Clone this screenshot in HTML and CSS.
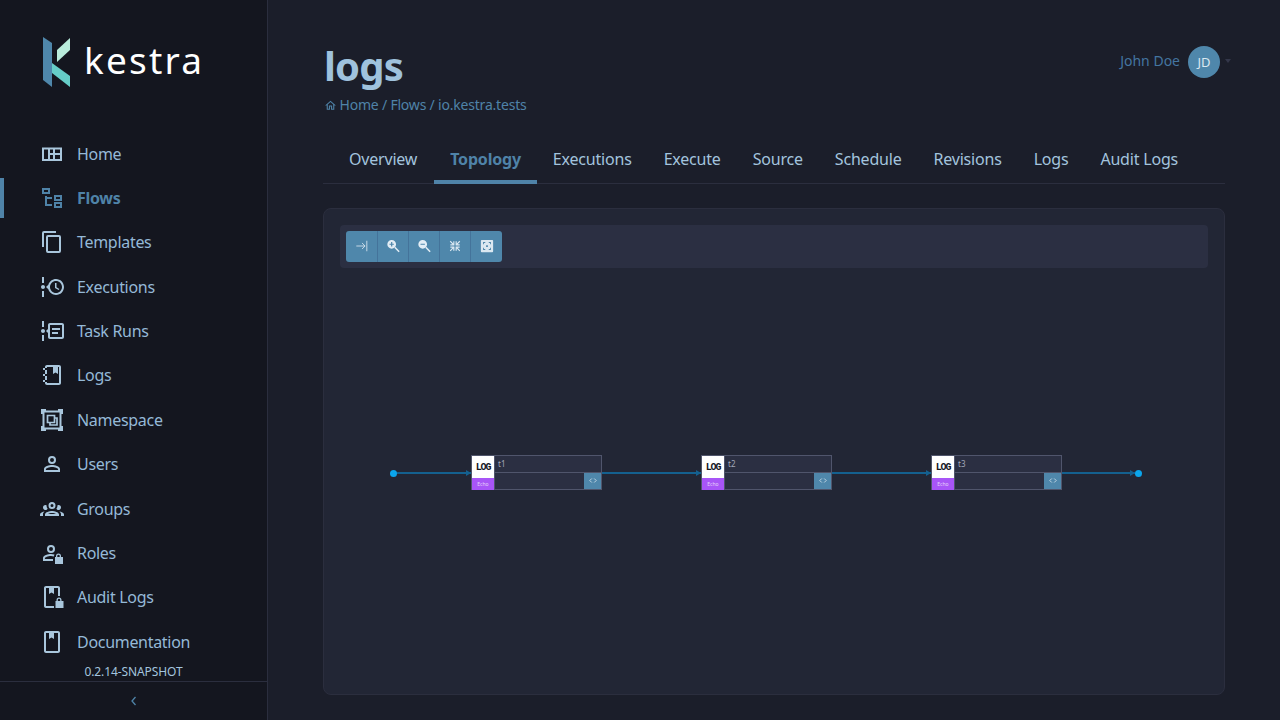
FILE: index.html
```html
<!DOCTYPE html>
<html lang="en">
    <head>
        <meta charset="UTF-8" />
        <meta name="viewport" content="width=device-width, initial-scale=1.0" />
        <title>logs</title>
        <link rel="stylesheet" href="styles.css">
    </head>
    <body>
        <aside class="sidebar">
            <div class="logo">
                <svg class="logo-mark" viewBox="0 0 28 50" width="28" height="50">
                    <polygon points="0,0 9,6 9,50 0,43" fill="#4f87ab"/>
                    <polygon points="14,13 27,1 27,13 14,25" fill="#b9ecdc"/>
                    <polygon points="9,26 27,39 27,50 9,36" fill="#66cdc8"/>
                </svg>
                <span class="logo-text">kestra</span>
            </div>
            <nav class="nav">
                <a class="nav-item"><svg viewBox="0 0 24 24"><path d="M2 5.500h20V19H2zM4 7.500V17h4V7.500zM10 7.500V11h3V7.500zM10 13v4h3v-4zM15 7.500V11h5V7.500zM15 13v4h5v-4z" fill-rule="evenodd"/></svg>Home</a>
                <a class="nav-item active"><svg viewBox="0 0 24 24"><path d="M12 13H7V18H12V20H5V10H7V11H12V13M8 4V6H4V4H8M10 2H2V8H10V2M20 11V13H16V11H20M22 9H14V15H22V9M20 18V20H16V18H20M22 16H14V22H22V16Z"/></svg>Flows</a>
                <a class="nav-item"><svg viewBox="0 0 24 24"><path d="M19,21H8V7H19M19,5H8A2,2 0 0,0 6,7V21A2,2 0 0,0 8,23H19A2,2 0 0,0 21,21V7A2,2 0 0,0 19,5M16,1H4A2,2 0 0,0 2,3V17H4V3H16V1Z"/></svg>Templates</a>
                <a class="nav-item"><svg viewBox="0 0 24 24"><path d="M4 2V8H2V2H4M2 22V16H4V22H2M5 12C5 13.110 4.110 14 3 14C1.900 14 1 13.110 1 12C1 10.900 1.900 10 3 10C4.110 10 5 10.900 5 12M16 4C20.420 4 24 7.580 24 12C24 16.420 20.420 20 16 20C12.390 20 9.340 17.610 8.340 14.330L6 12L8.340 9.670C9.340 6.390 12.390 4 16 4M16 6C12.690 6 10 8.690 10 12C10 15.310 12.690 18 16 18C19.310 18 22 15.310 22 12C22 8.690 19.310 6 16 6M15 13V8H16.500V12.200L19.400 13.900L18.600 15.100L15 13Z"/></svg>Executions</a>
                <a class="nav-item"><svg viewBox="0 0 24 24"><path d="M4 2V8H2V2H4M2 22V16H4V22H2M5 12C5 13.110 4.110 14 3 14C1.900 14 1 13.110 1 12C1 10.900 1.900 10 3 10C4.110 10 5 10.900 5 12M24 6V18C24 19.110 23.110 20 22 20H10C8.900 20 8 19.110 8 18V14L6 12L8 10V6C8 4.890 8.900 4 10 4H22C23.110 4 24 4.890 24 6M22 6H10V18H22V6M12 9H20V11H12V9M12 13H18V15H12V13Z"/></svg>Task Runs</a>
                <a class="nav-item"><svg viewBox="0 0 24 24"><path d="M3 7V5H5V4C5 2.890 5.900 2 7 2H19C20.100 2 21 2.890 21 4V20C21 21.110 20.100 22 19 22H7C5.900 22 5 21.110 5 20V19H3V17H5V13H3V11H5V7H3M7 11H5V13H7V11M7 7V5H5V7H7M7 19V17H5V19H7M13 4H7V20H19V4H18V11L15.500 9.500L13 11V4Z"/></svg>Logs</a>
                <a class="nav-item"><svg viewBox="0 0 24 24"><path fill-rule="evenodd" d="M1 1H6V2.500H18V1H23V6H21.500V18H23V23H18V21.500H6V23H1V18H2.500V6H1ZM4.500 4.500V19.500H19.500V4.500Z"/><path class="line" d="M7.500 7.500h7v7h-7zM10 14.500v2.500h7v-7h-2.500"/></svg>Namespace</a>
                <a class="nav-item"><svg viewBox="0 0 24 24"><path d="M12,4A4,4 0 0,1 16,8A4,4 0 0,1 12,12A4,4 0 0,1 8,8A4,4 0 0,1 12,4M12,6A2,2 0 0,0 10,8A2,2 0 0,0 12,10A2,2 0 0,0 14,8A2,2 0 0,0 12,6M12,13C14.670,13 20,14.330 20,17V20H4V17C4,14.330 9.330,13 12,13M12,14.900C9.030,14.900 5.900,16.360 5.900,17V18.100H18.100V17C18.100,16.360 14.970,14.900 12,14.900Z"/></svg>Users</a>
                <a class="nav-item"><svg viewBox="0 0 24 24"><path d="M12,5A3.500,3.500 0 0,0 8.500,8.500A3.500,3.500 0 0,0 12,12A3.500,3.500 0 0,0 15.500,8.500A3.500,3.500 0 0,0 12,5M12,7A1.500,1.500 0 0,1 13.500,8.500A1.500,1.500 0 0,1 12,10A1.500,1.500 0 0,1 10.500,8.500A1.500,1.500 0 0,1 12,7M5.500,8A2.500,2.500 0 0,0 3,10.500C3,11.440 3.530,12.250 4.290,12.680C4.650,12.880 5.060,13 5.500,13C5.940,13 6.350,12.880 6.710,12.680C7.080,12.470 7.390,12.170 7.620,11.810C6.890,10.860 6.500,9.700 6.500,8.500C6.500,8.410 6.500,8.310 6.500,8.220C6.200,8.080 5.860,8 5.500,8M18.500,8C18.140,8 17.800,8.080 17.500,8.220C17.500,8.310 17.500,8.410 17.500,8.500C17.500,9.700 17.110,10.860 16.380,11.810C16.500,12 16.630,12.150 16.780,12.300C16.940,12.450 17.100,12.580 17.290,12.680C17.650,12.880 18.060,13 18.500,13C18.940,13 19.350,12.880 19.710,12.680C20.470,12.250 21,11.440 21,10.500A2.500,2.500 0 0,0 18.500,8M12,14C9.660,14 5,15.170 5,17.500V19H19V17.500C19,15.170 14.340,14 12,14M4.710,14.550C2.780,14.780 0,15.760 0,17.500V19H3V17.070C3,16.060 3.690,15.220 4.710,14.550M19.290,14.550C20.310,15.220 21,16.060 21,17.070V19H24V17.500C24,15.760 21.220,14.780 19.290,14.550M12,16C13.530,16 15.240,16.500 16.230,17H7.770C8.760,16.500 10.470,16 12,16Z"/></svg>Groups</a>
                <a class="nav-item"><svg viewBox="0 0 24 24"><path d="M11,4A4,4 0 0,1 15,8A4,4 0 0,1 11,12A4,4 0 0,1 7,8A4,4 0 0,1 11,4M11,6A2,2 0 0,0 9,8A2,2 0 0,0 11,10A2,2 0 0,0 13,8A2,2 0 0,0 11,6M11,13C12,13 13.300,13.200 14.500,13.600L13.800,15.400C12.900,15.100 11.900,14.900 11,14.900C8,14.900 4.900,16.360 4.900,17V18.100H13V20H3V17C3,14.330 8.330,13 11,13Z"/><path d="M21 16V15A2.500 2.500 0 0 0 16 15V16H15V23H23V16ZM17.300 16V15A1.200 1.200 0 0 1 19.700 15V16Z" fill-rule="evenodd"/></svg>Roles</a>
                <a class="nav-item"><svg viewBox="0 0 24 24"><path d="M6 1H18C19.100 1 20 1.900 20 3V11H18V3H14V9L11.500 7.500L9 9V3H6V21H14V23H6C4.900 23 4 22.100 4 21V3C4 1.900 4.900 1 6 1Z"/><path d="M21.500 16V15A2.500 2.500 0 0 0 16.500 15V16H15.500V23H23.500V16ZM17.800 16V15A1.200 1.200 0 0 1 20.200 15V16Z" fill-rule="evenodd"/></svg>Audit Logs</a>
                <a class="nav-item"><svg viewBox="0 0 24 24"><path d="M6 1H18C19.100 1 20 1.900 20 3V21C20 22.100 19.100 23 18 23H6C4.900 23 4 22.100 4 21V3C4 1.900 4.900 1 6 1ZM6 3V21H18V3H14V9L11.500 7.500L9 9V3Z" fill-rule="evenodd"/></svg>Documentation</a>
            </nav>
            <div class="version">0.2.14-SNAPSHOT</div>
            <button class="collapse">
                <svg viewBox="0 0 8 12" width="8" height="12"><path d="M5.500 2 2 6l3.500 4" fill="none" stroke="#4f83a8" stroke-width="1.300"/></svg>
            </button>
        </aside>

        <main class="main">
            <header class="top">
                <div>
                    <h1 class="title">logs</h1>
                    <div class="crumbs">
                        <svg viewBox="0 0 24 24" width="13" height="13"><path d="M12 5.690l5 4.500V18h-2v-6H9v6H7v-7.810l5-4.500M12 3L2 12h3v8h6v-6h2v6h6v-8h3L12 3z" fill="#4f83a8"/></svg>
                        <span>Home</span> / <span>Flows</span> / <span>io.kestra.tests</span>
                    </div>
                </div>
                <div class="user">
                    <span class="user-name">John Doe</span>
                    <span class="avatar">JD</span>
                    <span class="caret"></span>
                </div>
            </header>

            <div class="tabs">
                <a class="tab">Overview</a>
                <a class="tab active">Topology</a>
                <a class="tab">Executions</a>
                <a class="tab">Execute</a>
                <a class="tab">Source</a>
                <a class="tab">Schedule</a>
                <a class="tab">Revisions</a>
                <a class="tab">Logs</a>
                <a class="tab">Audit Logs</a>
            </div>

            <section class="card">
                <div class="toolbar">
                    <div class="btn-group">
                        <button class="tool"><svg viewBox="0 0 16 16"><path d="M1.500 8h10M8 4.500 11.500 8 8 11.500M13.500 2v12" fill="none" stroke="#d6e4ef" stroke-width="1"/></svg></button>
                        <button class="tool"><svg viewBox="0 0 16 16"><path d="M6.500 1a5 5 0 1 0 0 10 5 5 0 0 0 0-10zM4 5.300h1.800V3.500h1.400v1.800H9v1.400H7.200v1.800H5.800V6.700H4z" fill="#e3edf5" fill-rule="evenodd"/><path d="m10 9.500 5 5" stroke="#e3edf5" stroke-width="1.800"/></svg></button>
                        <button class="tool"><svg viewBox="0 0 16 16"><path d="M6.500 1a5 5 0 1 0 0 10 5 5 0 0 0 0-10zM4 5.300h5v1.400H4z" fill="#e3edf5" fill-rule="evenodd"/><path d="m10 9.500 5 5" stroke="#e3edf5" stroke-width="1.800"/></svg></button>
                        <button class="tool"><svg viewBox="0 0 24 24"><path d="M19.500,3.090L15,7.590V4H13V11H20V9H16.410L20.910,4.500L19.500,3.090M4,13V15H7.590L3.090,19.500L4.500,20.910L9,16.410V20H11V13H4M20,13H13V20H15V16.410L19.500,20.910L20.910,19.500L16.410,15H20V13M4,9V11H11V4H9V7.590L4.500,3.090L3.090,4.500L7.590,9H4Z" fill="#dbe8f1"/></svg></button>
                        <button class="tool"><svg viewBox="0 0 16 16"><path d="M2 1h12a1 1 0 0 1 1 1v12a1 1 0 0 1-1 1H2a1 1 0 0 1-1-1V2a1 1 0 0 1 1-1zM3.500 3.500V6h1V4.500H6v-1zM10 3.500v1h1.500V6h1V3.500zM3.500 10v2.500H6v-1H4.500V10zM11.500 10v1.500H10v1h2.500V10zM7 7v2h2V7z" fill="#dbe8f1" fill-rule="evenodd"/></svg></button>
                    </div>
                </div>
                <div class="graph">
                    <span class="dot"></span>
                    <span class="edge edge-first"></span>
                    <div class="node">
                        <div class="node-side"><span class="node-icon">LOG</span><span class="node-type">Echo</span></div>
                        <div class="node-body">
                            <div class="node-name">t1</div>
                            <div class="node-foot"><span class="node-btn"><svg viewBox="0 0 10 8" width="10" height="8"><path d="M3.500 1.500 1 4l2.500 2.500M6.500 1.500 9 4 6.500 6.500" fill="none" stroke="#dbe8f1"/></svg></span></div>
                        </div>
                    </div>
                    <span class="edge edge-mid"></span>
                    <div class="node">
                        <div class="node-side"><span class="node-icon">LOG</span><span class="node-type">Echo</span></div>
                        <div class="node-body">
                            <div class="node-name">t2</div>
                            <div class="node-foot"><span class="node-btn"><svg viewBox="0 0 10 8" width="10" height="8"><path d="M3.500 1.500 1 4l2.500 2.500M6.500 1.500 9 4 6.500 6.500" fill="none" stroke="#dbe8f1"/></svg></span></div>
                        </div>
                    </div>
                    <span class="edge edge-mid"></span>
                    <div class="node">
                        <div class="node-side"><span class="node-icon">LOG</span><span class="node-type">Echo</span></div>
                        <div class="node-body">
                            <div class="node-name">t3</div>
                            <div class="node-foot"><span class="node-btn"><svg viewBox="0 0 10 8" width="10" height="8"><path d="M3.500 1.500 1 4l2.500 2.500M6.500 1.500 9 4 6.500 6.500" fill="none" stroke="#dbe8f1"/></svg></span></div>
                        </div>
                    </div>
                    <span class="edge edge-last"></span>
                    <span class="dot"></span>
                </div>
            </section>
        </main>
    </body>
</html>
```

FILE: styles.css
```css
* {
    box-sizing: border-box;
}
html, body {
    height: 100%;
}
body {
    margin: 0;
    display: flex;
    overflow: hidden;
    background: #1b1e2a;
    color: #a3c4de;
    font: normal 16px "Noto Sans", "Open Sans", sans-serif;
}

/* sidebar */
.sidebar {
    width: 268px;
    height: 720px;
    flex-shrink: 0;
    display: flex;
    flex-direction: column;
    background: #14161f;
    border-right: 1px solid #2b2e3e;
}
.logo {
    height: 131.6px;
    padding: 36px 0 0 43px;
    display: flex;
    align-items: flex-start;
    gap: 13px;
}
.logo-mark {
    flex-shrink: 0;
    margin-top: 1px;
}
.logo-text {
    color: #fff;
    font-size: 37px;
    font-weight: 400;
    line-height: 48px;
    letter-spacing: 2.2px;
}
.nav {
    display: flex;
    flex-direction: column;
}
.nav-item {
    height: 40px;
    margin: 2.18px 0;
    display: flex;
    align-items: center;
    gap: 13px;
    padding-left: 36px;
    color: #95b9d7;
    border-left: 4px solid transparent;
    letter-spacing: -0.3px;
}
.nav-item svg {
    width: 24px;
    height: 24px;
    fill: #a9c6dc;
}
.nav-item svg .line {
    fill: none;
    stroke: #a9c6dc;
    stroke-width: 1.7;
}
.nav-item.active {
    color: #4f83a8;
    font-weight: 700;
    border-left-color: #4f83a8;
}
.nav-item.active svg {
    fill: #4f83a8;
}
.version {
    height: 17px;
    font-size: 12px;
    line-height: 16px;
    text-align: center;
    letter-spacing: -0.1px;
    color: #a3c4de;
}
.collapse {
    flex: 1;
    display: flex;
    align-items: center;
    justify-content: center;
    background: none;
    border: 0;
    border-top: 1px solid #2b2e3e;
}

/* main */
.main {
    flex: 1;
    min-width: 0;
    padding: 0 55px 25px 55px;
    display: flex;
    flex-direction: column;
}
.top {
    height: 136px;
    display: flex;
    justify-content: space-between;
}
.title {
    margin: 41px 0 0 1px;
    font-size: 40px;
    line-height: 50px;
    font-weight: 700;
    letter-spacing: -0.8px;
    color: #9fc2dd;
}
.crumbs {
    margin: 4px 0 0 1px;
    font-size: 14px;
    line-height: 20px;
    letter-spacing: -0.2px;
    color: #4f83a8;
}
.crumbs svg {
    vertical-align: -2px;
    margin-right: -1px;
}
.user {
    display: flex;
    align-items: center;
    height: 32px;
    margin-top: 46px;
    margin-right: -6px;
    font-size: 14px;
    color: #4475a0;
}
.user-name {
    margin-top: -4px;
}
.avatar {
    width: 32px;
    height: 32px;
    margin-left: 8px;
    border-radius: 50%;
    background: #4f87ab;
    color: #dbe8f1;
    font-size: 13px;
    line-height: 32px;
    text-align: center;
}
.caret {
    width: 0;
    height: 0;
    margin-left: 5px;
    margin-top: -3px;
    border: 3px solid transparent;
    border-top: 4px solid #33374a;
    border-bottom: 0;
}
.tabs {
    height: 48px;
    padding-left: 10px;
    display: flex;
    border-bottom: 1px solid #2b2e3e;
}
.tab {
    padding: 0 16px;
    line-height: 46px;
    letter-spacing: -0.2px;
    color: #a3c4de;
}
.tab:first-child {
    padding-right: 17px;
}
.tab.active {
    color: #4f83a8;
    font-weight: 700;
    border-bottom: 4px solid #4f83a8;
    margin-bottom: -1px;
}

/* topology card */
.card {
    flex: 1;
    margin-top: 24px;
    padding: 16px;
    display: flex;
    flex-direction: column;
    background: #222635;
    border: 1px solid #2b2e3e;
    border-radius: 8px;
}
.toolbar {
    height: 43px;
    padding: 6px;
    background: #2b2f42;
    border-radius: 4px;
}
.btn-group {
    display: inline-flex;
    border-radius: 3px;
    overflow: hidden;
}
.tool {
    width: 31px;
    height: 31px;
    padding: 0;
    display: flex;
    align-items: center;
    justify-content: center;
    background: #4f87ab;
    border: 0;
    border-left: 1px solid #44739a;
}
.tool:first-child {
    border-left: 0;
}
.tool:last-child {
    width: 32px;
}
.tool svg {
    width: 14px;
    height: 14px;
    margin-top: -1px;
}
.graph {
    flex: 1;
    padding-left: 50px;
    display: flex;
    align-items: center;
}
.dot {
    width: 7px;
    height: 7px;
    flex-shrink: 0;
    border-radius: 50%;
    background: #0ba5ec;
}
.edge {
    position: relative;
    height: 2px;
    background: #14608f;
}
.edge::after {
    content: "";
    position: absolute;
    right: 0;
    top: -2px;
    border-left: 5px solid #14608f;
    border-top: 3px solid transparent;
    border-bottom: 3px solid transparent;
}
.edge-first {
    width: 74px;
}
.edge-mid {
    width: 99px;
}
.edge-last {
    width: 73px;
}
.node {
    width: 131px;
    height: 35px;
    margin-bottom: 2px;
    flex-shrink: 0;
    display: flex;
    border: 1px solid #50556c;
    background: #2b2f42;
}
.node-side {
    width: 23px;
    display: flex;
    flex-direction: column;
    border-right: 1px solid #50556c;
}
.node-icon {
    height: 22px;
    background: #fff;
    color: #14161f;
    font: bold 10px "Liberation Mono", monospace;
    line-height: 24px;
    letter-spacing: -1.2px;
    text-align: center;
}
.node-type {
    flex: 1;
    background: #a855f7;
    color: #e6d5fb;
    font-size: 5px;
    line-height: 12px;
    text-align: center;
}
.node-body {
    flex: 1;
    display: flex;
    flex-direction: column;
}
.node-name {
    height: 17px;
    padding-left: 3px;
    border-bottom: 1px solid #50556c;
    color: #a2a7b8;
    font-size: 8px;
    line-height: 15px;
}
.node-foot {
    flex: 1;
    display: flex;
    justify-content: flex-end;
}
.node-btn {
    width: 17px;
    display: flex;
    align-items: center;
    justify-content: center;
    background: #4f87ab;
}
.node-btn svg {
    width: 8px;
    height: 7px;
}
```
